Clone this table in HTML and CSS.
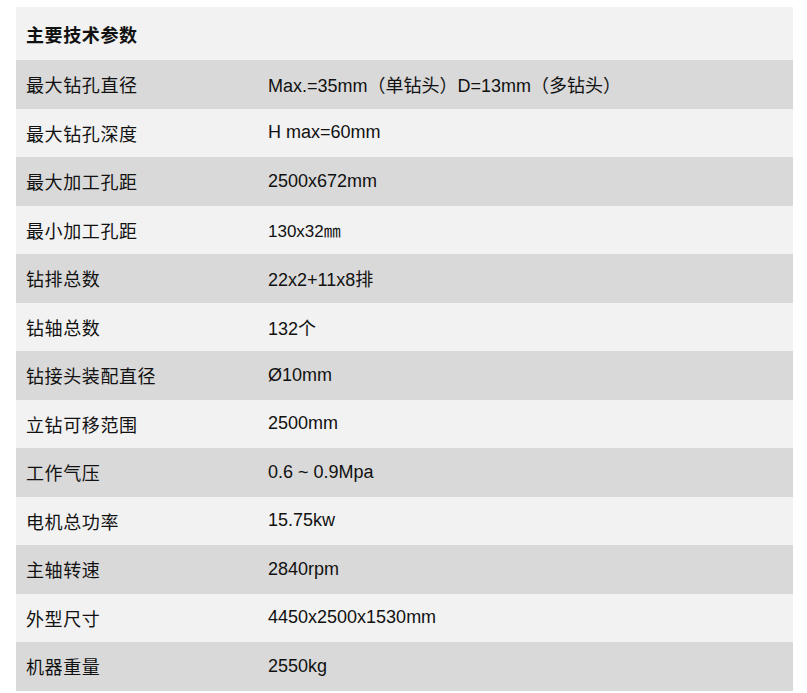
FILE: index.html
```html
<!DOCTYPE html>
<html lang="zh-CN">
<head>
<meta charset="utf-8">
<link rel="stylesheet" href="styles.css">
</head>
<body>
<table class="spec">
  <colgroup>
    <col class="col-k">
    <col class="col-v">
  </colgroup>
  <thead>
    <tr class="head"><th colspan="2">主要技术参数</th></tr>
  </thead>
  <tbody>
    <tr class="dark"><td class="k">最大钻孔直径</td><td class="v">Max.=35mm（单钻头）D=13mm（多钻头）</td></tr>
    <tr class="light"><td class="k">最大钻孔深度</td><td class="v">H max=60mm</td></tr>
    <tr class="dark"><td class="k">最大加工孔距</td><td class="v">2500x672mm</td></tr>
    <tr class="light"><td class="k">最小加工孔距</td><td class="v alt">130x32㎜</td></tr>
    <tr class="dark"><td class="k">钻排总数</td><td class="v">22x2+11x8排</td></tr>
    <tr class="light"><td class="k">钻轴总数</td><td class="v">132个</td></tr>
    <tr class="dark"><td class="k">钻接头装配直径</td><td class="v">Ø10mm</td></tr>
    <tr class="light"><td class="k">立钻可移范围</td><td class="v">2500mm</td></tr>
    <tr class="dark"><td class="k">工作气压</td><td class="v">0.6 ~ 0.9Mpa</td></tr>
    <tr class="light"><td class="k">电机总功率</td><td class="v">15.75kw</td></tr>
    <tr class="dark"><td class="k">主轴转速</td><td class="v">2840rpm</td></tr>
    <tr class="light"><td class="k">外型尺寸</td><td class="v">4450x2500x1530mm</td></tr>
    <tr class="dark"><td class="k">机器重量</td><td class="v">2550kg</td></tr>
  </tbody>
</table>
</body>
</html>
```
FILE: styles.css
```css
html, body {
  margin: 0;
  padding: 0;
  background: #ffffff;
}
body {
  padding: 7px 14px 0 16px;
  font-family: "Liberation Sans", "Noto Sans CJK SC", sans-serif;
  font-size: 18px;
  color: #111111;
}
.spec {
  width: 777px;
  border-collapse: collapse;
  table-layout: fixed;
}
.col-k {
  width: 252px;
}
.spec th {
  text-align: left;
  font-weight: bold;
  height: 53px;
  padding: 0 0 0 10px;
  background: #f2f2f2;
  font-family: "Noto Sans CJK SC", sans-serif;
  font-size: 18px;
  letter-spacing: 0.6px;
}
.spec td {
  height: 48.5px;
  padding: 0;
  vertical-align: middle;
  white-space: nowrap;
}
.spec .k {
  padding-left: 10px;
  font-family: "Noto Sans CJK SC", sans-serif;
  font-size: 18px;
  letter-spacing: 0.6px;
}
.spec .v {
  padding-left: 0;
}
.spec .alt {
  font-size: 17px;
}
.dark {
  background: #d9d9d9;
}
.light {
  background: #f2f2f2;
}
```
